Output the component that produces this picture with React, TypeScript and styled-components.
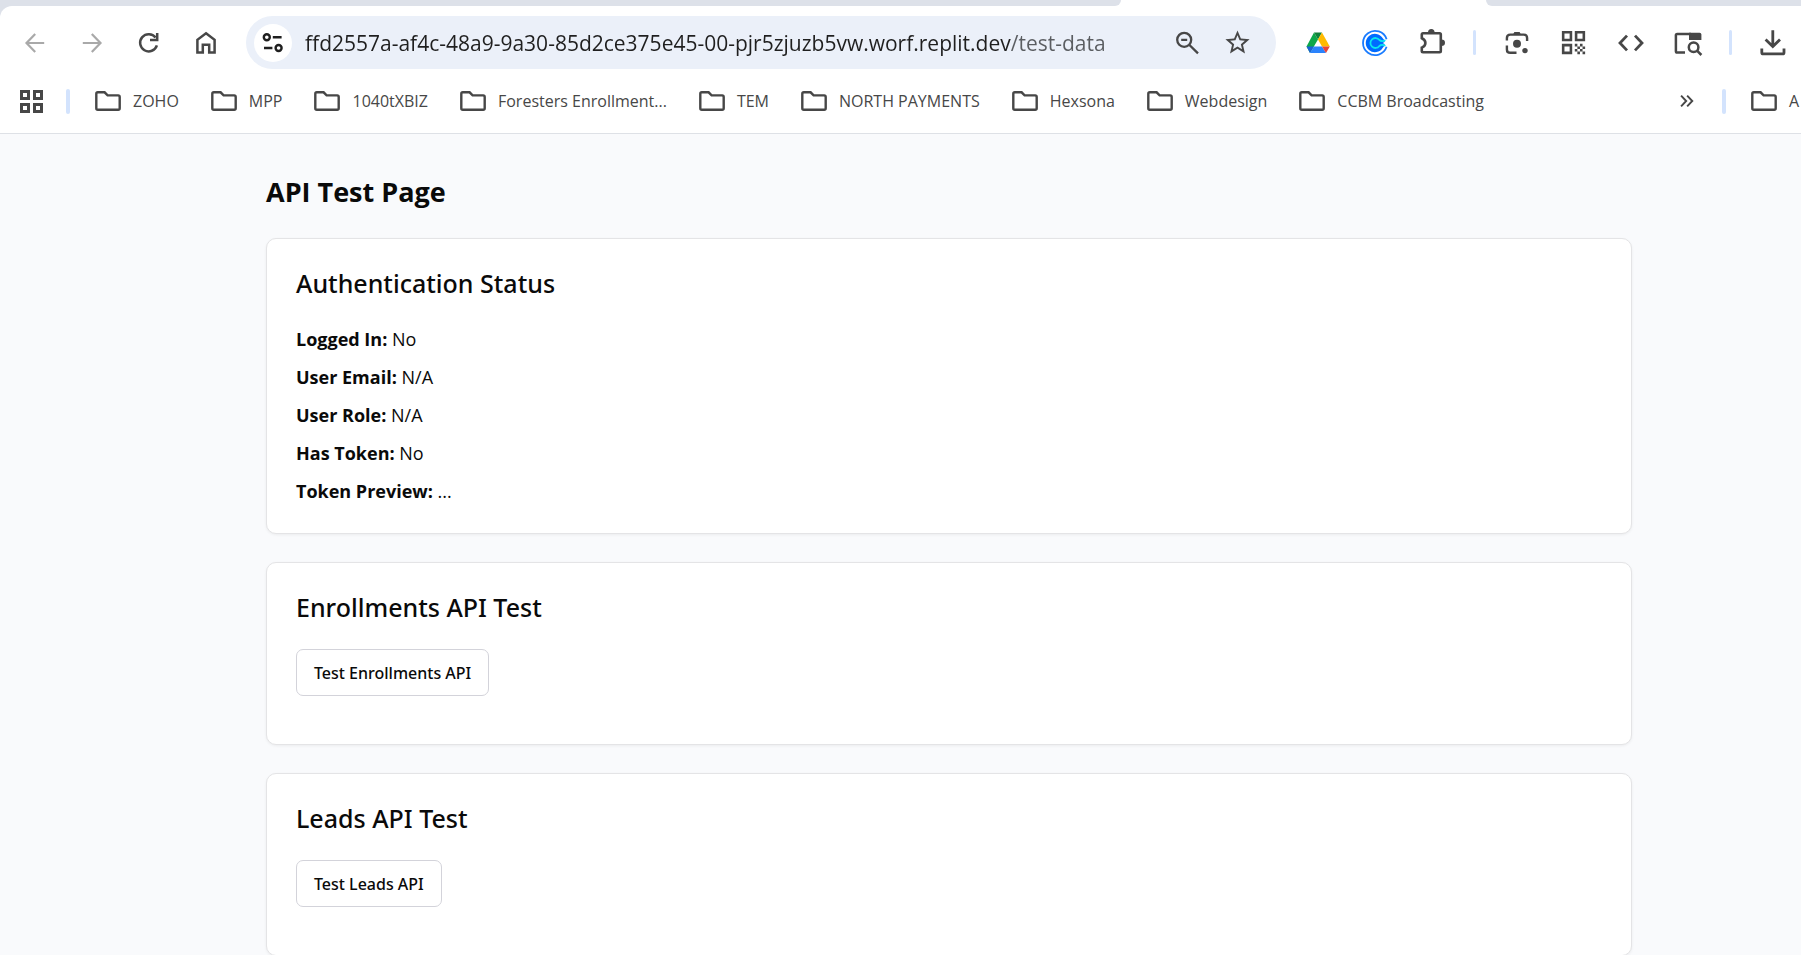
import React from 'react';
import styled, { createGlobalStyle } from 'styled-components';
import { MdQrCode, MdStarBorder } from 'react-icons/md';

const ink = '#474747';
const divider = '#d3e3fd';

const GlobalStyle = createGlobalStyle`
  *, *::before, *::after { box-sizing: border-box; }
  html { background: #f9fafc; }
  body {
    margin: 0;
    min-height: 100vh;
    overflow: hidden;
    color: #0a0a0a;
    background: #f9fafc;
    font-family: "Open Sans", "Noto Sans", sans-serif;
  }
`;

const Browser = styled.header`
  background: #fff;
  border-bottom: 1px solid #dee1e6;
`;

const TabStrip = styled.div`
  display: flex;
  justify-content: space-between;
  height: 6px;
  background: #fff;
`;

const InactiveTabs = styled.div<{ $side: 'left' | 'right' }>`
  width: ${(p) => (p.$side === 'left' ? '1121px' : '315px')};
  height: 6px;
  background: #dde1e9;
  border-radius: ${(p) => (p.$side === 'left' ? '0 0 14px 0' : '0 0 0 14px')};
`;

const ToolbarBack = styled.div`
  background: linear-gradient(#dde1e9 0 20px, #fff 20px);
`;

const Toolbar = styled.div`
  display: flex;
  align-items: center;
  padding: 10px 0 0 6px;
  background: #fff;
  border-top-left-radius: 12px;
`;

const ToolButton = styled.button<{ $dim?: boolean }>`
  display: flex;
  flex: none;
  align-items: center;
  justify-content: center;
  width: 57px;
  height: 48px;
  padding: 0;
  border: 0;
  background: none;
  color: ${(p) => (p.$dim ? '#a9a9a9' : ink)};
`;

const AddressBar = styled.div`
  display: flex;
  flex: 1;
  align-items: center;
  height: 53px;
  margin: 0 13px 0 12px;
  padding: 0 13px 0 8px;
  border-radius: 27px;
  background: #ebf0f9;
`;

const SiteInfo = styled.button`
  display: flex;
  flex: none;
  align-items: center;
  justify-content: center;
  width: 38px;
  height: 38px;
  padding: 0;
  border: 0;
  border-radius: 50%;
  background: #fff;
  color: #1f1f1f;
`;

/* The host is dark and the path after it is grey. */
const UrlInput = styled.input`
  flex: 1;
  min-width: 0;
  height: 40px;
  margin-left: 13px;
  padding: 0;
  border: 0;
  outline: 0;
  color: #1f1f1f;
  font: 400 21px/40px "Open Sans", sans-serif;
  background: linear-gradient(90deg, #1f1f1f 0 706px, #5a5d61 706px);
  -webkit-background-clip: text;
  background-clip: text;
  -webkit-text-fill-color: transparent;
`;

const AddressAction = styled(ToolButton)`
  width: 51px;
`;

const Separator = styled.span<{ $wide?: boolean }>`
  flex: none;
  width: ${(p) => (p.$wide ? '4px' : '3px')};
  height: 25px;
  margin: ${(p) => (p.$wide ? '0 25px 0 23px' : '0 12px 0 13px')};
  border-radius: 2px;
  background: ${divider};
`;

const BookmarksBar = styled.nav`
  display: flex;
  align-items: center;
  height: 64px;
  padding-left: 20px;
  overflow: hidden;
`;

const AppsButton = styled(ToolButton)`
  width: 23px;
`;

const BookmarkList = styled.div`
  display: flex;
  flex: 1;
  gap: 32px;
  min-width: 0;
  overflow: hidden;
`;

const Bookmark = styled.a`
  display: flex;
  flex: none;
  align-items: center;
  gap: 12px;
  color: ${ink};
  font-size: 16px;
  line-height: 24px;
  text-decoration: none;
  white-space: nowrap;
`;

const OverflowButton = styled(ToolButton)`
  width: 24px;
`;

const AllBookmarks = styled.div`
  display: flex;
  align-items: center;
  width: 50px;
  overflow: hidden;
`;

const Page = styled.main`
  padding: 42px 169px 0 266px;
`;

const Title = styled.h1`
  margin: 0 0 30px;
  font-size: 27px;
  font-weight: 700;
  line-height: 32px;
`;

const Cards = styled.div`
  display: flex;
  flex-direction: column;
  gap: 28px;
`;

const Card = styled.section`
  padding: 29px 29px 28px;
  border: 1px solid #e4e4e6;
  border-radius: 10px;
  background: #fff;
  box-shadow: 0 1px 3px rgba(0, 0, 0, 0.06);
`;

const CardTitle = styled.h2`
  margin: 0 0 27px;
  font: 500 25px/30px "Noto Sans", sans-serif;
`;

const StatusList = styled.div`
  display: flex;
  flex-direction: column;
  gap: 10px;
`;

const StatusLine = styled.p`
  margin: 0;
  font-size: 18px;
  line-height: 28px;
`;

const TestButton = styled.button`
  display: block;
  height: 47px;
  margin-bottom: 20px;
  padding: 0 17px;
  border: 1px solid #d3d3da;
  border-radius: 7px;
  background: #fff;
  color: #0a0a0a;
  font: 500 16px/24px "Noto Sans", sans-serif;
`;

type IconProps = { children: React.ReactNode; w?: number };

const Icon = ({ children, w = 2.2 }: IconProps) => (
  <svg width="30" height="30" viewBox="0 0 30 30" fill="none" stroke="currentColor" strokeWidth={w} aria-hidden="true">
    {children}
  </svg>
);

const FolderIcon = () => (
  <svg width="26" height="20" viewBox="0 0 26 20" fill="none" stroke={ink} strokeWidth="2.4" aria-hidden="true">
    <path d="M2.8 1.3H9.6L12.6 4.4H23.2Q24.7 4.4 24.7 5.9V17.2Q24.7 18.7 23.2 18.7H2.8Q1.3 18.7 1.3 17.2V2.8Q1.3 1.3 2.8 1.3Z" />
  </svg>
);

const bookmarks = ['ZOHO', 'MPP', '1040tXBIZ', 'Foresters Enrollment...', 'TEM', 'NORTH PAYMENTS', 'Hexsona', 'Webdesign', 'CCBM Broadcasting'];

const status = [
  ['Logged In:', 'No'],
  ['User Email:', 'N/A'],
  ['User Role:', 'N/A'],
  ['Has Token:', 'No'],
  ['Token Preview:', '...'],
];

const FolderLink = ({ name }: { name: string }) => (
  <Bookmark href="#">
    <FolderIcon />
    {name}
  </Bookmark>
);

export default function App() {
  return (
    <>
      <GlobalStyle />
      <Browser>
        <TabStrip>
          <InactiveTabs $side="left" />
          <InactiveTabs $side="right" />
        </TabStrip>
        <ToolbarBack>
          <Toolbar>
            <ToolButton $dim aria-label="Back">
              <Icon><path d="M24.2 15H7M15.2 6L6.5 15L15.2 24" /></Icon>
            </ToolButton>
            <ToolButton $dim aria-label="Forward">
              <Icon><path d="M5.8 15H23M14.8 6L23.5 15L14.8 24" /></Icon>
            </ToolButton>
            <ToolButton aria-label="Reload">
              <Icon w={2.5}>
                <path d="M22.9 17.4A8.6 8.6 0 1 1 21.6 9.6" />
                <path d="M23.2 5V12H16" />
              </Icon>
            </ToolButton>
            <ToolButton aria-label="Home">
              <Icon w={2.5}><path d="M15 5.3L23.6 11.8V24.4H18.2V16.8H11.8V24.4H6.4V11.8Z" /></Icon>
            </ToolButton>
            <AddressBar>
              <SiteInfo aria-label="View site information">
                <Icon w={2.4}>
                  <circle cx="8.8" cy="9.3" r="3" />
                  <circle cx="20.6" cy="20" r="3" />
                  <path d="M14.8 9.3H23.6M6 20H14.4" />
                </Icon>
              </SiteInfo>
              <UrlInput
                type="text"
                aria-label="Address"
                spellCheck={false}
                defaultValue="ffd2557a-af4c-48a9-9a30-85d2ce375e45-00-pjr5zjuzb5vw.worf.replit.dev/test-data"
              />
              <AddressAction aria-label="Zoom">
                <Icon w={2.3}>
                  <circle cx="12.2" cy="11.8" r="7" />
                  <path d="M17.2 16.8L26 25.4M9.2 11.8H15.2" />
                </Icon>
              </AddressAction>
              <AddressAction aria-label="Bookmark this page">
                <MdStarBorder size={29} />
              </AddressAction>
            </AddressBar>
            <ToolButton aria-label="Google Drive">
              <Icon w={0}>
                <path d="M11 4.5L15 11.5L7 25L3.5 18.5Z" fill="#0da84a" />
                <path d="M11 4.5H19L15 11.5Z" fill="#12813a" />
                <path d="M19 4.5L26.8 18.5H19L15 11.5Z" fill="#ffba00" />
                <path d="M3.5 18.5H11L7 25Z" fill="#1b62d6" />
                <path d="M11 18.5H19L23 25H7Z" fill="#2b83fc" />
                <path d="M19 18.5H26.8L23 25Z" fill="#ea4335" />
              </Icon>
            </ToolButton>
            <ToolButton aria-label="Calendly">
              <Icon w={1.8}>
                <path d="M26.6 11.2A12.1 12.1 0 1 0 26.6 18.8" stroke="#1a7cff" />
                <path d="M22.8 10.2A9.2 9.2 0 1 0 22.8 19.8L24.6 17.6V12.4Z" fill="#006bff" stroke="none" />
                <path d="M25.4 12.2Q21.6 14 19.4 12A5 5 0 1 0 19.4 18Q21.6 16 25.4 17.8" stroke="#0ae8f0" />
                <path d="M22.6 15L28 12.6V17.4Z" fill="#fff" stroke="none" />
              </Icon>
            </ToolButton>
            <ToolButton aria-label="Extensions">
              <Icon w={2.6}>
                <path d="M6 5.3H22.6Q23.8 5.3 23.8 6.5V23.1Q23.8 24.3 22.6 24.3H6Q4.8 24.3 4.8 23.1V19.6Q8.4 18 8.4 14.9T4.8 10.2V6.5Q4.8 5.3 6 5.3Z" />
                <path d="M11 4.6a3.3 3.6 0 0 1 6.6 0ZM24.4 11.4a3.6 3.3 0 0 1 0 6.6Z" fill="currentColor" stroke="none" />
              </Icon>
            </ToolButton>
            <Separator />
            <ToolButton aria-label="Search with Lens">
              <Icon w={2.4}>
                <path d="M4.9 12.6V10Q4.9 6.6 8.3 6.6H21.7Q25.1 6.6 25.1 10V13M4.9 17.6V21.4Q4.9 24.8 8.3 24.8H14.5" />
                <path d="M11 6.4L12.4 4H17.6L19 6.4Z" fill="currentColor" stroke="none" />
                <circle cx="15" cy="15.8" r="4" fill="currentColor" stroke="none" />
                <circle cx="23" cy="22.6" r="2.7" fill="currentColor" stroke="none" />
              </Icon>
            </ToolButton>
            <ToolButton aria-label="Create QR code">
              <MdQrCode size={31} />
            </ToolButton>
            <ToolButton aria-label="Developer tools">
              <Icon w={2.8}><path d="M11 7.6L4 15L11 22.4M19 7.6L26 15L19 22.4" /></Icon>
            </ToolButton>
            <ToolButton aria-label="Search tabs">
              <Icon w={2.5}>
                <path d="M12 24.6H4.2Q2.9 24.6 2.9 23.3V7.2Q2.9 5.9 4.2 5.9H18" />
                <path d="M16 4.7H26.6Q28.4 4.7 28.4 6.5V12H16Z" fill="currentColor" stroke="none" />
                <circle cx="20.6" cy="19.2" r="4.8" />
                <path d="M24 22.6L28.4 27" />
              </Icon>
            </ToolButton>
            <Separator />
            <ToolButton aria-label="Downloads">
              <Icon w={2.8}>
                <path d="M14.8 2.3V18M7.6 11.6L14.8 18.6L22 11.6M3.8 20.6V24.4Q3.8 25.9 5.3 25.9H24.5Q26 25.9 26 24.4V20.6" />
              </Icon>
            </ToolButton>
          </Toolbar>
        </ToolbarBack>
        <BookmarksBar aria-label="Bookmarks">
          <AppsButton aria-label="Apps">
            <svg width="23" height="23" viewBox="0 0 23 23" fill="none" stroke={ink} strokeWidth="3" aria-hidden="true">
              <path d="M1.5 1.5h7v7h-7zM14.5 1.5h7v7h-7zM1.5 14.5h7v7h-7zM14.5 14.5h7v7h-7z" />
            </svg>
          </AppsButton>
          <Separator $wide />
          <BookmarkList>
            {bookmarks.map((name) => (
              <FolderLink key={name} name={name} />
            ))}
          </BookmarkList>
          <OverflowButton aria-label="More bookmarks">
            <Icon w={2.4}><path d="M7.6 8.2L14 15L7.6 21.8M15.2 8.2L21.6 15L15.2 21.8" /></Icon>
          </OverflowButton>
          <Separator $wide />
          <AllBookmarks>
            <FolderLink name="A" />
          </AllBookmarks>
        </BookmarksBar>
      </Browser>
      <Page>
        <Title>API Test Page</Title>
        <Cards>
          <Card>
            <CardTitle>Authentication Status</CardTitle>
            <StatusList>
              {status.map(([label, value]) => (
                <StatusLine key={label}>
                  <strong>{label}</strong> {value}
                </StatusLine>
              ))}
            </StatusList>
          </Card>
          <Card>
            <CardTitle>Enrollments API Test</CardTitle>
            <TestButton>Test Enrollments API</TestButton>
          </Card>
          <Card>
            <CardTitle>Leads API Test</CardTitle>
            <TestButton>Test Leads API</TestButton>
          </Card>
        </Cards>
      </Page>
    </>
  );
}
